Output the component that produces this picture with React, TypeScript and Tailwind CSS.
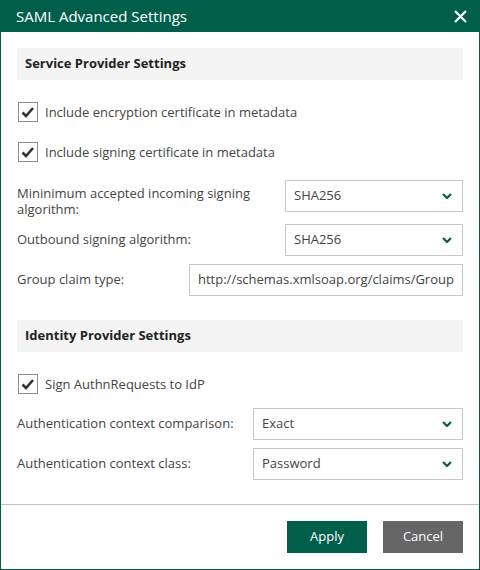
import React from 'react';

const font = { fontFamily: '"Open Sans", "Noto Sans", sans-serif' };

const Chevron: React.FC = () => (
  <svg width="10" height="6" viewBox="0 0 10 6" className="shrink-0">
    <polyline points="1,1 5,5 9,1" fill="none" stroke="#005f4b" strokeWidth="2.2" />
  </svg>
);

const CheckBox: React.FC<{ label: string }> = ({ label }) => (
  <label className="flex items-center gap-[7px] h-[20px]">
    <span className="w-[20px] h-[20px] border border-[#8c8c8c] bg-white flex items-center justify-center">
      <svg width="18" height="18" viewBox="0 0 18 18">
        <polyline points="3.5,9.5 7,13 14,5" fill="none" stroke="#333333" strokeWidth="2.6" />
      </svg>
    </span>
    <span className="text-[13px] text-[#444] pt-px">{label}</span>
  </label>
);

const Select: React.FC<{ value: string; width: string }> = ({ value, width }) => (
  <div className={`${width} h-[32px] border border-[#c8c8c8] bg-white flex items-center justify-between pl-2 pr-[10px]`}>
    <span className="text-[13px] text-[#444]">{value}</span>
    <Chevron />
  </div>
);

const SectionHeader: React.FC<{ title: string }> = ({ title }) => (
  <div className="h-[32px] bg-[#f4f4f4] flex items-center pl-2">
    <span className="text-[13px] font-bold text-[#222]">{title}</span>
  </div>
);

export default function App() {
  return (
    <div style={font} className="w-[480px] h-[570px] border border-[#005f4b] bg-white flex flex-col">
      {/* title bar */}
      <div className="h-[31px] bg-[#005f4b] flex items-center justify-between pl-[15px] pr-[12px] shrink-0">
        <span className="text-[15px] text-white">SAML Advanced Settings</span>
        <svg width="13" height="13" viewBox="0 0 13 13">
          <path d="M1 1 L12 12 M12 1 L1 12" stroke="white" strokeWidth="2.2" />
        </svg>
      </div>

      <div className="flex-1 px-4 pt-4 flex flex-col">
        <SectionHeader title="Service Provider Settings" />

        <div className="mt-[22px] pl-px">
          <CheckBox label="Include encryption certificate in metadata" />
        </div>
        <div className="mt-[20px] pl-px">
          <CheckBox label="Include signing certificate in metadata" />
        </div>

        <div className="mt-[18px] h-[32px] flex items-start justify-between">
          <span className="text-[13px] text-[#444] leading-[16px] w-[240px] pt-[5px]">
            Mininimum accepted incoming signing algorithm:
          </span>
          <Select value="SHA256" width="w-[178px]" />
        </div>
        <div className="mt-[12px] flex items-center justify-between">
          <span className="text-[13px] text-[#444]">Outbound signing algorithm:</span>
          <Select value="SHA256" width="w-[178px]" />
        </div>
        <div className="mt-[8px] flex items-center justify-between">
          <span className="text-[13px] text-[#444]">Group claim type:</span>
          <div className="w-[274px] h-[32px] border border-[#c8c8c8] flex items-center pl-2">
            <span className="text-[13px] text-[#444] whitespace-nowrap">http://schemas.xmlsoap.org/claims/Group</span>
          </div>
        </div>

        <div className="mt-[24px]">
          <SectionHeader title="Identity Provider Settings" />
        </div>

        <div className="mt-[22px] pl-px">
          <CheckBox label="Sign AuthnRequests to IdP" />
        </div>

        <div className="mt-[14px] flex items-center justify-between">
          <span className="text-[13px] text-[#444]">Authentication context comparison:</span>
          <Select value="Exact" width="w-[210px]" />
        </div>
        <div className="mt-[8px] flex items-center justify-between">
          <span className="text-[13px] text-[#444]">Authentication context class:</span>
          <Select value="Password" width="w-[210px]" />
        </div>
      </div>

      {/* footer */}
      <div className="border-t border-[#c0c0c0] h-[65px] shrink-0 flex items-start justify-end gap-4 pt-4 pr-4">
        <button className="w-[80px] h-[32px] bg-[#005f4b] text-white text-[13px]">Apply</button>
        <button className="w-[80px] h-[32px] bg-[#666666] text-white text-[13px]">Cancel</button>
      </div>
    </div>
  );
}
